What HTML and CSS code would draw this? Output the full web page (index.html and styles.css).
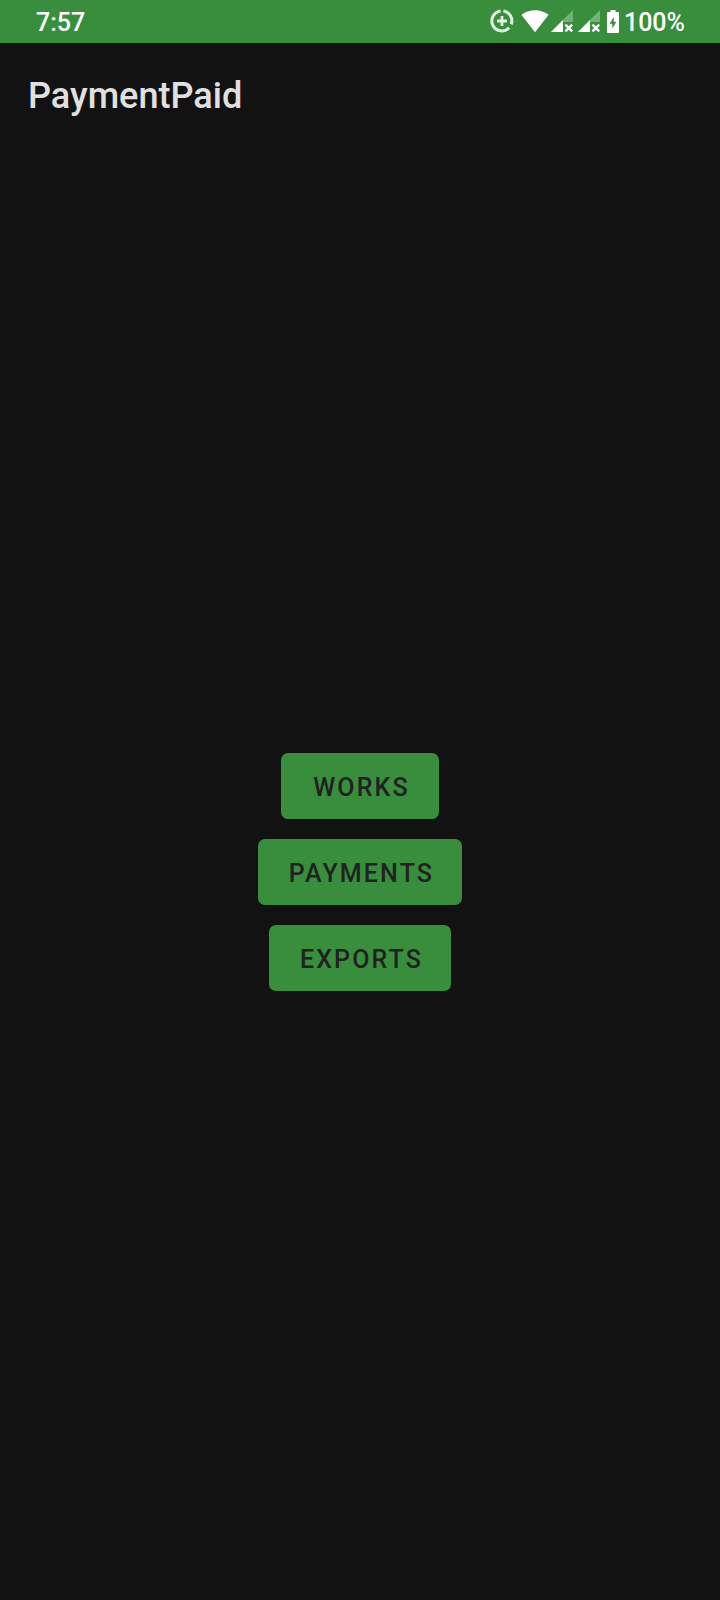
FILE: index.html
```
<!DOCTYPE html>
<html lang="en">
<head>
<meta charset="utf-8">
<title>PaymentPaid</title>
<link rel="stylesheet" href="styles.css">
</head>
<body>
<div class="screen">
  <header class="status">
    <span class="time">7:57</span>
    <div class="indicators">
      <svg class="saver" width="24" height="24" viewBox="0 0 24 24" fill="none" stroke="#e0efe0">
        <path d="M13.4 2A10 10 0 0 1 21.2 15.4M19.2 18.7A10 10 0 1 1 10.6 2" stroke-width="3"/>
        <path d="M12 7v10M7 12h10" stroke-width="2.8"/>
      </svg>
      <svg class="wifi" width="28" height="23" viewBox="0 0 28 23" fill="#fff"><path d="M.4 4.8Q6.5.3 14 .3T27.6 4.8L14 22.2Z"/></svg>
      <svg class="signal" width="22" height="22" viewBox="0 0 22 22">
        <path d="M0 22 22 0V12H12V22Z" fill="#76b079"/>
        <path d="M0 22 12 10V22Z" fill="#fff"/>
        <path d="m14.400 14.600 6.800 6.800m0-6.800-6.800 6.800" stroke="#fff" stroke-width="2.400"/>
      </svg>
      <svg class="signal" width="22" height="22" viewBox="0 0 22 22">
        <path d="M0 22 22 0V12H12V22Z" fill="#76b079"/>
        <path d="M0 22 12 10V22Z" fill="#fff"/>
        <path d="m14.400 14.600 6.800 6.800m0-6.800-6.800 6.800" stroke="#fff" stroke-width="2.400"/>
      </svg>
      <svg class="battery" width="12" height="23" viewBox="0 0 12 23" fill="#fff">
        <path d="M3.500 0h5v2H11q1 0 1 1v19q0 1-1 1H1q-1 0-1-1V3q0-1 1-1h2.500Z"/>
        <path d="M6.800 7 2.600 13.700H5.300V18.500L9.400 11.800H6.800Z" fill="#388e3c"/>
      </svg>
      <span class="level">100%</span>
    </div>
  </header>
  <h1 class="title">PaymentPaid</h1>
  <main class="menu">
    <button class="action works">WORKS</button>
    <button class="action payments">PAYMENTS</button>
    <button class="action exports">EXPORTS</button>
  </main>
</div>
</body>
</html>
```
FILE: styles.css
```
body {
  margin: 0;
  background: #121212;
  font-family: Roboto, sans-serif;
}
.screen {
  display: flex;
  flex-direction: column;
  width: 720px;
  height: 1600px;
  overflow: hidden;
}
.status {
  display: flex;
  justify-content: space-between;
  height: 43px;
  box-sizing: border-box;
  padding: 0 35px 0 36px;
  background: #388e3c;
  color: #fff;
  font-size: 25px;
  font-weight: 500;
  line-height: 45px;
}
.indicators {
  display: flex;
  align-items: flex-start;
}
.indicators svg { flex: none; }
.saver { margin: 9px 7px 0 0; }
.wifi { margin: 10px 2px 0 0; }
.signal { margin: 10px 5px 0 0; }
.battery { margin: 10px 5px 0 2px; }
.title {
  height: 104px;
  margin: 0;
  padding-left: 28px;
  color: #e0e0e0;
  font-size: 36.1px;
  font-weight: 500;
  line-height: 107px;
}
.menu {
  display: flex;
  flex-direction: column;
  align-items: center;
  gap: 20px;
  padding-top: 606px;
}
.action {
  height: 66px;
  box-sizing: border-box;
  padding: 3px 0 0 3px;
  border: 0;
  border-radius: 7px;
  background: #388e3c;
  color: #212121;
  font: 500 25px/64px Roboto, sans-serif;
  letter-spacing: 2.15px;
  text-align: center;
}
.works { width: 158px; }
.payments { width: 204px; }
.exports { width: 182px; }
```
